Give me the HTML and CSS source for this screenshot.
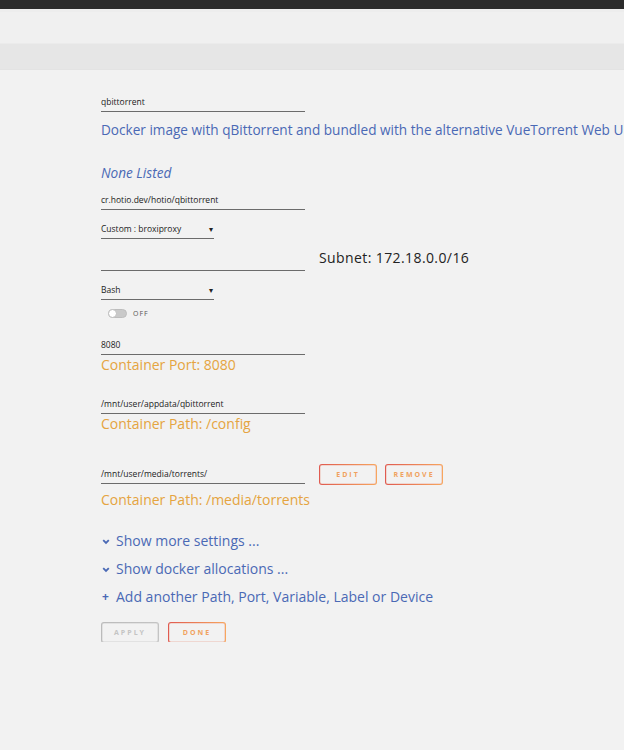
FILE: index.html
```html
<!DOCTYPE html>
<html lang="en">
<head>
    <meta charset="UTF-8">
    <meta name="viewport" content="width=device-width, initial-scale=1.0">
    <title>Update Container</title>
    <link rel="stylesheet" href="styles.css">
</head>
<body>
    <div class="topbar"></div>
    <div class="header"></div>
    <div class="tabs"></div>

    <form class="content">
        <div class="field g-first">qbittorrent</div>
        <div class="desc">Docker image with qBittorrent and bundled with the alternative VueTorrent Web UI</div>

        <div class="desc none g-none">None Listed</div>
        <div class="field g-s">cr.hotio.dev/hotio/qbittorrent</div>

        <div class="field select g-m">Custom : broxiproxy <span class="caret">&#9662;</span></div>
        <div class="row g-m">
            <div class="field"></div>
            <span class="subnet">Subnet: 172.18.0.0/16</span>
        </div>
        <div class="field select g-m">Bash <span class="caret">&#9662;</span></div>
        <div class="toggle-row">
            <span class="toggle"><span class="knob"></span></span>
            <span class="toggle-label">OFF</span>
        </div>

        <div class="field g-port">8080</div>
        <div class="hint">Container Port: 8080</div>

        <div class="field g-l">/mnt/user/appdata/qbittorrent</div>
        <div class="hint">Container Path: /config</div>

        <div class="row g-xl">
            <div class="field">/mnt/user/media/torrents/</div>
            <button type="button" class="btn">EDIT</button>
            <button type="button" class="btn">REMOVE</button>
        </div>
        <div class="hint g-xs">Container Path: /media/torrents</div>

        <div class="link g-link">
            <svg width="8" height="6" viewBox="0 0 8 6"><path d="M1.2 1.2 L4 4 L6.8 1.2" fill="none" stroke="#4a69b5" stroke-width="1.8"/></svg>
            Show more settings ...
        </div>
        <div class="link">
            <svg width="8" height="6" viewBox="0 0 8 6"><path d="M1.2 1.2 L4 4 L6.8 1.2" fill="none" stroke="#4a69b5" stroke-width="1.8"/></svg>
            Show docker allocations ...
        </div>
        <div class="link"><span class="plus">+</span> Add another Path, Port, Variable, Label or Device</div>

        <div class="actions">
            <button type="button" class="btn off">APPLY</button>
            <button type="button" class="btn">DONE</button>
        </div>
    </form>
</body>
</html>
```

FILE: styles.css
```css
body {
    margin: 0;
    background: #f2f2f2;
    font-family: "Open Sans", "Noto Sans", sans-serif;
    overflow: hidden;
}
.topbar {
    height: 9px;
    background: #2b2b2b;
}
.header {
    height: 35px;
    background: #f0f0f0;
    border-top: 3px solid #ededed;
    box-sizing: border-box;
    border-bottom: 1px solid #ebebeb;
}
.tabs {
    height: 26px;
    background: #e6e6e6;
    border-bottom: 1px solid #e3e3e3;
    box-sizing: border-box;
}
.content {
    display: flex;
    flex-direction: column;
    align-items: flex-start;
    padding-left: 101px;
}
.field {
    width: 204px;
    height: 18px;
    line-height: 18px;
    font-size: 8.5px;
    color: #222;
    border-bottom: 1px solid #6b6b6b;
    white-space: nowrap;
}
.select {
    width: 113px;
    display: flex;
    justify-content: space-between;
}
.caret {
    font-size: 8px;
    padding-right: 1px;
}
.desc {
    height: 20px;
    line-height: 20px;
    font-size: 13.6px;
    color: #4a69b5;
    white-space: nowrap;
    margin-top: 8px;
}
.none {
    font-style: italic;
}
.row {
    display: flex;
    align-items: flex-end;
}
.subnet {
    font-size: 14px;
    letter-spacing: 0.4px;
    color: #222;
    margin-left: 14px;
    margin-bottom: 2px;
    line-height: 20px;
    position: relative;
    top: -1px;
}
.toggle-row {
    display: flex;
    align-items: center;
    height: 14px;
    margin-top: 6px;
    padding-left: 7px;
}
.toggle {
    width: 19px;
    height: 9px;
    border-radius: 5px;
    background: #c9c9c9;
    border: 1px solid #bdbdbd;
    box-sizing: border-box;
    display: flex;
    align-items: center;
}
.knob {
    width: 9px;
    height: 9px;
    border-radius: 50%;
    background: #fff;
    border: 1px solid #bdbdbd;
    box-sizing: border-box;
    margin-left: -1px;
}
.toggle-label {
    font-size: 7px;
    letter-spacing: 1px;
    color: #555;
    margin-left: 6px;
}
.hint {
    height: 20px;
    line-height: 20px;
    font-size: 14px;
    color: #e5a440;
}
.btn {
    width: 58px;
    height: 21px;
    margin-left: 14px;
    font-family: "Open Sans", "Noto Sans", sans-serif;
    font-size: 7px;
    font-weight: bold;
    letter-spacing: 2px;
    color: #f0a25e;
    border: 1px solid transparent;
    border-radius: 3px;
    background: linear-gradient(#f2f2f2, #f2f2f2) padding-box,
                linear-gradient(90deg, #e05a50, #f7a75e) border-box;
    box-shadow: inset 0 0 0 0.5px rgba(230, 110, 80, 0.4);
    padding: 0;
    position: relative;
    top: 1px;
}
.btn + .btn {
    margin-left: 8px;
}
.btn.off {
    margin-left: 0;
    color: #c4c4c4;
    background: linear-gradient(#f2f2f2, #f2f2f2) padding-box,
                linear-gradient(90deg, #bbb, #c4c4c4) border-box;
    box-shadow: inset 0 0 0 0.5px rgba(180, 180, 180, 0.5);
}
.btn.off + .btn {
    margin-left: 9px;
}
.link {
    height: 20px;
    line-height: 20px;
    font-size: 14px;
    color: #4a69b5;
    margin-top: 8px;
    display: flex;
    align-items: center;
    gap: 6px;
}
.link svg {
    margin-left: 1px;
    margin-top: 2px;
}
.plus {
    font-size: 12px;
    font-weight: bold;
    width: 9px;
    text-align: center;
}
.actions {
    display: flex;
    margin-top: 14px;
}
.g-first { margin-top: 23px; }
.g-none { margin-top: 23px; }
.g-s { margin-top: 8px; }
.g-m { margin-top: 10px; }
.g-port { margin-top: 16px; }
.g-l { margin-top: 20px; }
.g-xl { margin-top: 29px; }
.g-xs { margin-top: 6px; }
.g-link { margin-top: 21px; }
```
